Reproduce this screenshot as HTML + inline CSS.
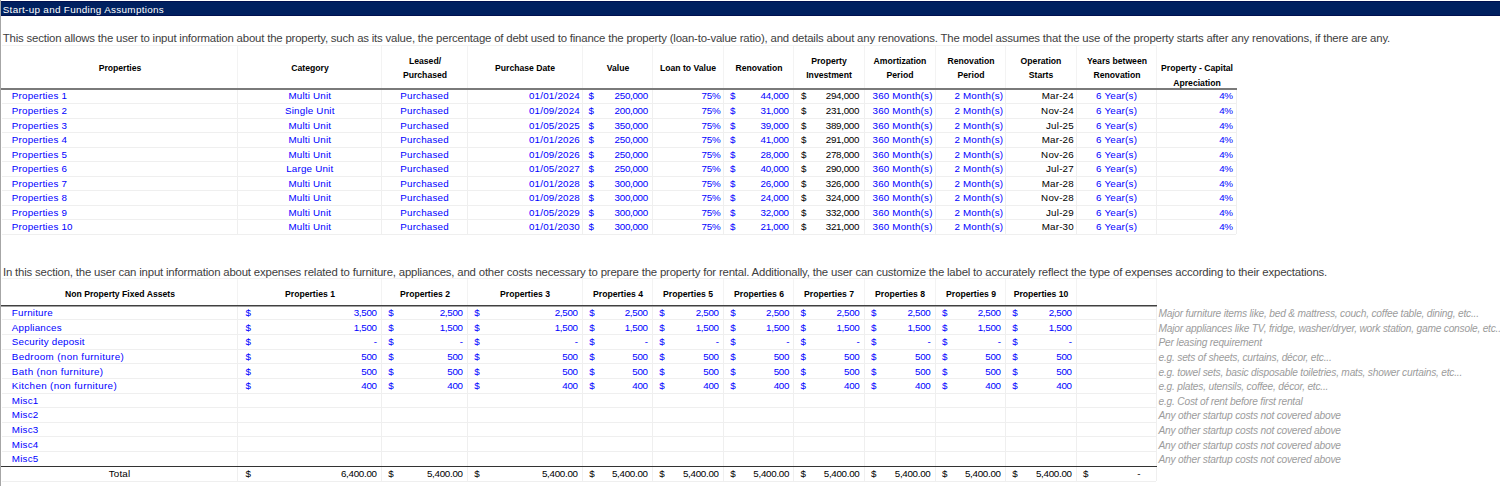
<!DOCTYPE html>
<html><head><meta charset="utf-8"><style>
html,body{margin:0;padding:0;background:#fff;}
body{width:1500px;height:486px;position:relative;overflow:hidden;font-family:"Liberation Sans",sans-serif;}
.t{position:absolute;white-space:nowrap;line-height:14px;height:14px;}
.l{position:absolute;}
</style></head><body>
<div class="l" style="left:0;top:0;width:1px;height:486px;background:#a6a6a6"></div>
<div class="l" style="left:1px;top:1px;width:1499px;height:15px;background:#002060"></div>
<div class="l" style="left:1px;top:1px;width:1499px;height:1px;background:#00104f"></div>
<div class="l" style="left:1px;top:15px;width:1499px;height:1px;background:#00104f"></div>
<div class="t" style="top:2.57px;font-size:9.9px;color:#ffffff;letter-spacing:0.31px;left:2.70px;">Start-up and Funding Assumptions</div>
<div class="t" style="top:31.05px;font-size:11.4px;color:#404040;letter-spacing:-0.186px;left:2.80px;">This section allows the user to input information about the property, such as its value, the percentage of debt used to finance the property (loan-to-value ratio), and details about any renovations. The model assumes that the use of the property starts after any renovations, if there are any.</div>
<div class="l" style="left:2px;top:45px;width:1154px;height:1px;background:#f3f3f3"></div>
<div class="l" style="left:237px;top:45px;width:1px;height:43px;background:#f3f3f3"></div>
<div class="l" style="left:237px;top:90px;width:1px;height:144px;background:#efefef"></div>
<div class="l" style="left:381px;top:45px;width:1px;height:43px;background:#f3f3f3"></div>
<div class="l" style="left:381px;top:90px;width:1px;height:144px;background:#efefef"></div>
<div class="l" style="left:467px;top:45px;width:1px;height:43px;background:#f3f3f3"></div>
<div class="l" style="left:467px;top:90px;width:1px;height:144px;background:#efefef"></div>
<div class="l" style="left:582px;top:45px;width:1px;height:43px;background:#f3f3f3"></div>
<div class="l" style="left:582px;top:90px;width:1px;height:144px;background:#efefef"></div>
<div class="l" style="left:652px;top:45px;width:1px;height:43px;background:#f3f3f3"></div>
<div class="l" style="left:652px;top:90px;width:1px;height:144px;background:#efefef"></div>
<div class="l" style="left:723px;top:45px;width:1px;height:43px;background:#f3f3f3"></div>
<div class="l" style="left:723px;top:90px;width:1px;height:144px;background:#efefef"></div>
<div class="l" style="left:793px;top:45px;width:1px;height:43px;background:#f3f3f3"></div>
<div class="l" style="left:793px;top:90px;width:1px;height:144px;background:#efefef"></div>
<div class="l" style="left:864px;top:45px;width:1px;height:43px;background:#f3f3f3"></div>
<div class="l" style="left:864px;top:90px;width:1px;height:144px;background:#efefef"></div>
<div class="l" style="left:935px;top:45px;width:1px;height:43px;background:#f3f3f3"></div>
<div class="l" style="left:935px;top:90px;width:1px;height:144px;background:#efefef"></div>
<div class="l" style="left:1005px;top:45px;width:1px;height:43px;background:#f3f3f3"></div>
<div class="l" style="left:1005px;top:90px;width:1px;height:144px;background:#efefef"></div>
<div class="l" style="left:1076px;top:45px;width:1px;height:43px;background:#f3f3f3"></div>
<div class="l" style="left:1076px;top:90px;width:1px;height:144px;background:#efefef"></div>
<div class="l" style="left:1156px;top:45px;width:1px;height:43px;background:#f3f3f3"></div>
<div class="l" style="left:1156px;top:90px;width:1px;height:144px;background:#efefef"></div>
<div class="l" style="left:1236px;top:90px;width:1px;height:144px;background:#efefef"></div>
<div class="l" style="left:1px;top:88px;width:1236px;height:2px;background:#7a7a7a"></div>
<div class="l" style="left:2px;top:103px;width:1234px;height:1px;background:#efefef"></div>
<div class="l" style="left:2px;top:118px;width:1234px;height:1px;background:#efefef"></div>
<div class="l" style="left:2px;top:132px;width:1234px;height:1px;background:#efefef"></div>
<div class="l" style="left:2px;top:147px;width:1234px;height:1px;background:#efefef"></div>
<div class="l" style="left:2px;top:161px;width:1234px;height:1px;background:#efefef"></div>
<div class="l" style="left:2px;top:176px;width:1234px;height:1px;background:#efefef"></div>
<div class="l" style="left:2px;top:190px;width:1234px;height:1px;background:#efefef"></div>
<div class="l" style="left:2px;top:205px;width:1234px;height:1px;background:#efefef"></div>
<div class="l" style="left:2px;top:219px;width:1234px;height:1px;background:#efefef"></div>
<div class="l" style="left:2px;top:234px;width:1234px;height:1px;background:#efefef"></div>
<div class="t" style="top:61.42px;font-size:9.6px;color:#000000;font-weight:bold;transform:scaleX(0.9);left:-30.50px;width:300px;text-align:center;">Properties</div>
<div class="t" style="top:61.42px;font-size:9.6px;color:#000000;font-weight:bold;transform:scaleX(0.9);left:159.80px;width:300px;text-align:center;">Category</div>
<div class="t" style="top:53.77px;font-size:9.6px;color:#000000;font-weight:bold;transform:scaleX(0.9);left:274.60px;width:300px;text-align:center;">Leased/</div>
<div class="t" style="top:67.87px;font-size:9.6px;color:#000000;font-weight:bold;transform:scaleX(0.9);left:274.60px;width:300px;text-align:center;">Purchased</div>
<div class="t" style="top:61.42px;font-size:9.6px;color:#000000;font-weight:bold;transform:scaleX(0.9);left:375.10px;width:300px;text-align:center;">Purchase Date</div>
<div class="t" style="top:61.42px;font-size:9.6px;color:#000000;font-weight:bold;transform:scaleX(0.9);left:467.60px;width:300px;text-align:center;">Value</div>
<div class="t" style="top:61.42px;font-size:9.6px;color:#000000;font-weight:bold;transform:scaleX(0.9);left:538.10px;width:300px;text-align:center;">Loan to Value</div>
<div class="t" style="top:61.42px;font-size:9.6px;color:#000000;font-weight:bold;transform:scaleX(0.9);left:608.80px;width:300px;text-align:center;">Renovation</div>
<div class="t" style="top:53.77px;font-size:9.6px;color:#000000;font-weight:bold;transform:scaleX(0.9);left:679.20px;width:300px;text-align:center;">Property</div>
<div class="t" style="top:67.87px;font-size:9.6px;color:#000000;font-weight:bold;transform:scaleX(0.9);left:679.20px;width:300px;text-align:center;">Investment</div>
<div class="t" style="top:53.77px;font-size:9.6px;color:#000000;font-weight:bold;transform:scaleX(0.9);left:749.90px;width:300px;text-align:center;">Amortization</div>
<div class="t" style="top:67.87px;font-size:9.6px;color:#000000;font-weight:bold;transform:scaleX(0.9);left:749.90px;width:300px;text-align:center;">Period</div>
<div class="t" style="top:53.77px;font-size:9.6px;color:#000000;font-weight:bold;transform:scaleX(0.9);left:820.50px;width:300px;text-align:center;">Renovation</div>
<div class="t" style="top:67.87px;font-size:9.6px;color:#000000;font-weight:bold;transform:scaleX(0.9);left:820.50px;width:300px;text-align:center;">Period</div>
<div class="t" style="top:53.77px;font-size:9.6px;color:#000000;font-weight:bold;transform:scaleX(0.9);left:891.10px;width:300px;text-align:center;">Operation</div>
<div class="t" style="top:67.87px;font-size:9.6px;color:#000000;font-weight:bold;transform:scaleX(0.9);left:891.10px;width:300px;text-align:center;">Starts</div>
<div class="t" style="top:53.77px;font-size:9.6px;color:#000000;font-weight:bold;transform:scaleX(0.9);left:966.60px;width:300px;text-align:center;">Years between</div>
<div class="t" style="top:67.87px;font-size:9.6px;color:#000000;font-weight:bold;transform:scaleX(0.9);left:966.60px;width:300px;text-align:center;">Renovation</div>
<div class="t" style="top:61.42px;font-size:9.6px;color:#000000;font-weight:bold;transform:scaleX(0.9);left:1046.50px;width:300px;text-align:center;">Property - Capital</div>
<div class="t" style="top:75.67px;font-size:9.6px;color:#000000;font-weight:bold;transform:scaleX(0.9);left:1046.50px;width:300px;text-align:center;">Apreciation</div>
<div class="t" style="top:89.45px;font-size:9.8px;color:#0000ff;letter-spacing:0.2px;left:11.85px;">Properties 1</div>
<div class="t" style="top:89.45px;font-size:9.8px;color:#0000ff;letter-spacing:0.2px;left:159.80px;width:300px;text-align:center;">Multi Unit</div>
<div class="t" style="top:89.45px;font-size:9.8px;color:#0000ff;letter-spacing:0.2px;left:274.60px;width:300px;text-align:center;">Purchased</div>
<div class="t" style="top:89.45px;font-size:9.8px;color:#0000ff;letter-spacing:0.2px;right:920.00px;text-align:right;">01/01/2024</div>
<div class="t" style="top:89.45px;font-size:9.8px;color:#0000ff;letter-spacing:-0.3px;left:588.60px;">$</div>
<div class="t" style="top:89.45px;font-size:9.8px;color:#0000ff;letter-spacing:-0.3px;right:852.10px;text-align:right;">250,000</div>
<div class="t" style="top:89.45px;font-size:9.8px;color:#0000ff;letter-spacing:-0.3px;right:779.70px;text-align:right;">75%</div>
<div class="t" style="top:89.45px;font-size:9.8px;color:#0000ff;letter-spacing:-0.3px;left:730.00px;">$</div>
<div class="t" style="top:89.45px;font-size:9.8px;color:#0000ff;letter-spacing:-0.3px;right:711.30px;text-align:right;">44,000</div>
<div class="t" style="top:89.45px;font-size:9.8px;color:#000000;letter-spacing:-0.3px;left:801.00px;">$</div>
<div class="t" style="top:89.45px;font-size:9.8px;color:#000000;letter-spacing:-0.3px;right:640.90px;text-align:right;">294,000</div>
<div class="t" style="top:89.45px;font-size:9.8px;color:#0000ff;letter-spacing:0.2px;right:567.40px;text-align:right;">360 Month(s)</div>
<div class="t" style="top:89.45px;font-size:9.8px;color:#0000ff;letter-spacing:0.2px;right:496.80px;text-align:right;">2 Month(s)</div>
<div class="t" style="top:89.45px;font-size:9.8px;color:#000000;letter-spacing:0.2px;right:426.10px;text-align:right;">Mar-24</div>
<div class="t" style="top:89.45px;font-size:9.8px;color:#0000ff;letter-spacing:0.2px;left:966.60px;width:300px;text-align:center;">6 Year(s)</div>
<div class="t" style="top:89.45px;font-size:9.8px;color:#0000ff;letter-spacing:-0.3px;right:267.30px;text-align:right;">4%</div>
<div class="t" style="top:103.99px;font-size:9.8px;color:#0000ff;letter-spacing:0.2px;left:11.85px;">Properties 2</div>
<div class="t" style="top:103.99px;font-size:9.8px;color:#0000ff;letter-spacing:0.2px;left:159.80px;width:300px;text-align:center;">Single Unit</div>
<div class="t" style="top:103.99px;font-size:9.8px;color:#0000ff;letter-spacing:0.2px;left:274.60px;width:300px;text-align:center;">Purchased</div>
<div class="t" style="top:103.99px;font-size:9.8px;color:#0000ff;letter-spacing:0.2px;right:920.00px;text-align:right;">01/09/2024</div>
<div class="t" style="top:103.99px;font-size:9.8px;color:#0000ff;letter-spacing:-0.3px;left:588.60px;">$</div>
<div class="t" style="top:103.99px;font-size:9.8px;color:#0000ff;letter-spacing:-0.3px;right:852.10px;text-align:right;">200,000</div>
<div class="t" style="top:103.99px;font-size:9.8px;color:#0000ff;letter-spacing:-0.3px;right:779.70px;text-align:right;">75%</div>
<div class="t" style="top:103.99px;font-size:9.8px;color:#0000ff;letter-spacing:-0.3px;left:730.00px;">$</div>
<div class="t" style="top:103.99px;font-size:9.8px;color:#0000ff;letter-spacing:-0.3px;right:711.30px;text-align:right;">31,000</div>
<div class="t" style="top:103.99px;font-size:9.8px;color:#000000;letter-spacing:-0.3px;left:801.00px;">$</div>
<div class="t" style="top:103.99px;font-size:9.8px;color:#000000;letter-spacing:-0.3px;right:640.90px;text-align:right;">231,000</div>
<div class="t" style="top:103.99px;font-size:9.8px;color:#0000ff;letter-spacing:0.2px;right:567.40px;text-align:right;">360 Month(s)</div>
<div class="t" style="top:103.99px;font-size:9.8px;color:#0000ff;letter-spacing:0.2px;right:496.80px;text-align:right;">2 Month(s)</div>
<div class="t" style="top:103.99px;font-size:9.8px;color:#000000;letter-spacing:0.2px;right:426.10px;text-align:right;">Nov-24</div>
<div class="t" style="top:103.99px;font-size:9.8px;color:#0000ff;letter-spacing:0.2px;left:966.60px;width:300px;text-align:center;">6 Year(s)</div>
<div class="t" style="top:103.99px;font-size:9.8px;color:#0000ff;letter-spacing:-0.3px;right:267.30px;text-align:right;">4%</div>
<div class="t" style="top:118.53px;font-size:9.8px;color:#0000ff;letter-spacing:0.2px;left:11.85px;">Properties 3</div>
<div class="t" style="top:118.53px;font-size:9.8px;color:#0000ff;letter-spacing:0.2px;left:159.80px;width:300px;text-align:center;">Multi Unit</div>
<div class="t" style="top:118.53px;font-size:9.8px;color:#0000ff;letter-spacing:0.2px;left:274.60px;width:300px;text-align:center;">Purchased</div>
<div class="t" style="top:118.53px;font-size:9.8px;color:#0000ff;letter-spacing:0.2px;right:920.00px;text-align:right;">01/05/2025</div>
<div class="t" style="top:118.53px;font-size:9.8px;color:#0000ff;letter-spacing:-0.3px;left:588.60px;">$</div>
<div class="t" style="top:118.53px;font-size:9.8px;color:#0000ff;letter-spacing:-0.3px;right:852.10px;text-align:right;">350,000</div>
<div class="t" style="top:118.53px;font-size:9.8px;color:#0000ff;letter-spacing:-0.3px;right:779.70px;text-align:right;">75%</div>
<div class="t" style="top:118.53px;font-size:9.8px;color:#0000ff;letter-spacing:-0.3px;left:730.00px;">$</div>
<div class="t" style="top:118.53px;font-size:9.8px;color:#0000ff;letter-spacing:-0.3px;right:711.30px;text-align:right;">39,000</div>
<div class="t" style="top:118.53px;font-size:9.8px;color:#000000;letter-spacing:-0.3px;left:801.00px;">$</div>
<div class="t" style="top:118.53px;font-size:9.8px;color:#000000;letter-spacing:-0.3px;right:640.90px;text-align:right;">389,000</div>
<div class="t" style="top:118.53px;font-size:9.8px;color:#0000ff;letter-spacing:0.2px;right:567.40px;text-align:right;">360 Month(s)</div>
<div class="t" style="top:118.53px;font-size:9.8px;color:#0000ff;letter-spacing:0.2px;right:496.80px;text-align:right;">2 Month(s)</div>
<div class="t" style="top:118.53px;font-size:9.8px;color:#000000;letter-spacing:0.2px;right:426.10px;text-align:right;">Jul-25</div>
<div class="t" style="top:118.53px;font-size:9.8px;color:#0000ff;letter-spacing:0.2px;left:966.60px;width:300px;text-align:center;">6 Year(s)</div>
<div class="t" style="top:118.53px;font-size:9.8px;color:#0000ff;letter-spacing:-0.3px;right:267.30px;text-align:right;">4%</div>
<div class="t" style="top:133.07px;font-size:9.8px;color:#0000ff;letter-spacing:0.2px;left:11.85px;">Properties 4</div>
<div class="t" style="top:133.07px;font-size:9.8px;color:#0000ff;letter-spacing:0.2px;left:159.80px;width:300px;text-align:center;">Multi Unit</div>
<div class="t" style="top:133.07px;font-size:9.8px;color:#0000ff;letter-spacing:0.2px;left:274.60px;width:300px;text-align:center;">Purchased</div>
<div class="t" style="top:133.07px;font-size:9.8px;color:#0000ff;letter-spacing:0.2px;right:920.00px;text-align:right;">01/01/2026</div>
<div class="t" style="top:133.07px;font-size:9.8px;color:#0000ff;letter-spacing:-0.3px;left:588.60px;">$</div>
<div class="t" style="top:133.07px;font-size:9.8px;color:#0000ff;letter-spacing:-0.3px;right:852.10px;text-align:right;">250,000</div>
<div class="t" style="top:133.07px;font-size:9.8px;color:#0000ff;letter-spacing:-0.3px;right:779.70px;text-align:right;">75%</div>
<div class="t" style="top:133.07px;font-size:9.8px;color:#0000ff;letter-spacing:-0.3px;left:730.00px;">$</div>
<div class="t" style="top:133.07px;font-size:9.8px;color:#0000ff;letter-spacing:-0.3px;right:711.30px;text-align:right;">41,000</div>
<div class="t" style="top:133.07px;font-size:9.8px;color:#000000;letter-spacing:-0.3px;left:801.00px;">$</div>
<div class="t" style="top:133.07px;font-size:9.8px;color:#000000;letter-spacing:-0.3px;right:640.90px;text-align:right;">291,000</div>
<div class="t" style="top:133.07px;font-size:9.8px;color:#0000ff;letter-spacing:0.2px;right:567.40px;text-align:right;">360 Month(s)</div>
<div class="t" style="top:133.07px;font-size:9.8px;color:#0000ff;letter-spacing:0.2px;right:496.80px;text-align:right;">2 Month(s)</div>
<div class="t" style="top:133.07px;font-size:9.8px;color:#000000;letter-spacing:0.2px;right:426.10px;text-align:right;">Mar-26</div>
<div class="t" style="top:133.07px;font-size:9.8px;color:#0000ff;letter-spacing:0.2px;left:966.60px;width:300px;text-align:center;">6 Year(s)</div>
<div class="t" style="top:133.07px;font-size:9.8px;color:#0000ff;letter-spacing:-0.3px;right:267.30px;text-align:right;">4%</div>
<div class="t" style="top:147.61px;font-size:9.8px;color:#0000ff;letter-spacing:0.2px;left:11.85px;">Properties 5</div>
<div class="t" style="top:147.61px;font-size:9.8px;color:#0000ff;letter-spacing:0.2px;left:159.80px;width:300px;text-align:center;">Multi Unit</div>
<div class="t" style="top:147.61px;font-size:9.8px;color:#0000ff;letter-spacing:0.2px;left:274.60px;width:300px;text-align:center;">Purchased</div>
<div class="t" style="top:147.61px;font-size:9.8px;color:#0000ff;letter-spacing:0.2px;right:920.00px;text-align:right;">01/09/2026</div>
<div class="t" style="top:147.61px;font-size:9.8px;color:#0000ff;letter-spacing:-0.3px;left:588.60px;">$</div>
<div class="t" style="top:147.61px;font-size:9.8px;color:#0000ff;letter-spacing:-0.3px;right:852.10px;text-align:right;">250,000</div>
<div class="t" style="top:147.61px;font-size:9.8px;color:#0000ff;letter-spacing:-0.3px;right:779.70px;text-align:right;">75%</div>
<div class="t" style="top:147.61px;font-size:9.8px;color:#0000ff;letter-spacing:-0.3px;left:730.00px;">$</div>
<div class="t" style="top:147.61px;font-size:9.8px;color:#0000ff;letter-spacing:-0.3px;right:711.30px;text-align:right;">28,000</div>
<div class="t" style="top:147.61px;font-size:9.8px;color:#000000;letter-spacing:-0.3px;left:801.00px;">$</div>
<div class="t" style="top:147.61px;font-size:9.8px;color:#000000;letter-spacing:-0.3px;right:640.90px;text-align:right;">278,000</div>
<div class="t" style="top:147.61px;font-size:9.8px;color:#0000ff;letter-spacing:0.2px;right:567.40px;text-align:right;">360 Month(s)</div>
<div class="t" style="top:147.61px;font-size:9.8px;color:#0000ff;letter-spacing:0.2px;right:496.80px;text-align:right;">2 Month(s)</div>
<div class="t" style="top:147.61px;font-size:9.8px;color:#000000;letter-spacing:0.2px;right:426.10px;text-align:right;">Nov-26</div>
<div class="t" style="top:147.61px;font-size:9.8px;color:#0000ff;letter-spacing:0.2px;left:966.60px;width:300px;text-align:center;">6 Year(s)</div>
<div class="t" style="top:147.61px;font-size:9.8px;color:#0000ff;letter-spacing:-0.3px;right:267.30px;text-align:right;">4%</div>
<div class="t" style="top:162.15px;font-size:9.8px;color:#0000ff;letter-spacing:0.2px;left:11.85px;">Properties 6</div>
<div class="t" style="top:162.15px;font-size:9.8px;color:#0000ff;letter-spacing:0.2px;left:159.80px;width:300px;text-align:center;">Large Unit</div>
<div class="t" style="top:162.15px;font-size:9.8px;color:#0000ff;letter-spacing:0.2px;left:274.60px;width:300px;text-align:center;">Purchased</div>
<div class="t" style="top:162.15px;font-size:9.8px;color:#0000ff;letter-spacing:0.2px;right:920.00px;text-align:right;">01/05/2027</div>
<div class="t" style="top:162.15px;font-size:9.8px;color:#0000ff;letter-spacing:-0.3px;left:588.60px;">$</div>
<div class="t" style="top:162.15px;font-size:9.8px;color:#0000ff;letter-spacing:-0.3px;right:852.10px;text-align:right;">250,000</div>
<div class="t" style="top:162.15px;font-size:9.8px;color:#0000ff;letter-spacing:-0.3px;right:779.70px;text-align:right;">75%</div>
<div class="t" style="top:162.15px;font-size:9.8px;color:#0000ff;letter-spacing:-0.3px;left:730.00px;">$</div>
<div class="t" style="top:162.15px;font-size:9.8px;color:#0000ff;letter-spacing:-0.3px;right:711.30px;text-align:right;">40,000</div>
<div class="t" style="top:162.15px;font-size:9.8px;color:#000000;letter-spacing:-0.3px;left:801.00px;">$</div>
<div class="t" style="top:162.15px;font-size:9.8px;color:#000000;letter-spacing:-0.3px;right:640.90px;text-align:right;">290,000</div>
<div class="t" style="top:162.15px;font-size:9.8px;color:#0000ff;letter-spacing:0.2px;right:567.40px;text-align:right;">360 Month(s)</div>
<div class="t" style="top:162.15px;font-size:9.8px;color:#0000ff;letter-spacing:0.2px;right:496.80px;text-align:right;">2 Month(s)</div>
<div class="t" style="top:162.15px;font-size:9.8px;color:#000000;letter-spacing:0.2px;right:426.10px;text-align:right;">Jul-27</div>
<div class="t" style="top:162.15px;font-size:9.8px;color:#0000ff;letter-spacing:0.2px;left:966.60px;width:300px;text-align:center;">6 Year(s)</div>
<div class="t" style="top:162.15px;font-size:9.8px;color:#0000ff;letter-spacing:-0.3px;right:267.30px;text-align:right;">4%</div>
<div class="t" style="top:176.69px;font-size:9.8px;color:#0000ff;letter-spacing:0.2px;left:11.85px;">Properties 7</div>
<div class="t" style="top:176.69px;font-size:9.8px;color:#0000ff;letter-spacing:0.2px;left:159.80px;width:300px;text-align:center;">Multi Unit</div>
<div class="t" style="top:176.69px;font-size:9.8px;color:#0000ff;letter-spacing:0.2px;left:274.60px;width:300px;text-align:center;">Purchased</div>
<div class="t" style="top:176.69px;font-size:9.8px;color:#0000ff;letter-spacing:0.2px;right:920.00px;text-align:right;">01/01/2028</div>
<div class="t" style="top:176.69px;font-size:9.8px;color:#0000ff;letter-spacing:-0.3px;left:588.60px;">$</div>
<div class="t" style="top:176.69px;font-size:9.8px;color:#0000ff;letter-spacing:-0.3px;right:852.10px;text-align:right;">300,000</div>
<div class="t" style="top:176.69px;font-size:9.8px;color:#0000ff;letter-spacing:-0.3px;right:779.70px;text-align:right;">75%</div>
<div class="t" style="top:176.69px;font-size:9.8px;color:#0000ff;letter-spacing:-0.3px;left:730.00px;">$</div>
<div class="t" style="top:176.69px;font-size:9.8px;color:#0000ff;letter-spacing:-0.3px;right:711.30px;text-align:right;">26,000</div>
<div class="t" style="top:176.69px;font-size:9.8px;color:#000000;letter-spacing:-0.3px;left:801.00px;">$</div>
<div class="t" style="top:176.69px;font-size:9.8px;color:#000000;letter-spacing:-0.3px;right:640.90px;text-align:right;">326,000</div>
<div class="t" style="top:176.69px;font-size:9.8px;color:#0000ff;letter-spacing:0.2px;right:567.40px;text-align:right;">360 Month(s)</div>
<div class="t" style="top:176.69px;font-size:9.8px;color:#0000ff;letter-spacing:0.2px;right:496.80px;text-align:right;">2 Month(s)</div>
<div class="t" style="top:176.69px;font-size:9.8px;color:#000000;letter-spacing:0.2px;right:426.10px;text-align:right;">Mar-28</div>
<div class="t" style="top:176.69px;font-size:9.8px;color:#0000ff;letter-spacing:0.2px;left:966.60px;width:300px;text-align:center;">6 Year(s)</div>
<div class="t" style="top:176.69px;font-size:9.8px;color:#0000ff;letter-spacing:-0.3px;right:267.30px;text-align:right;">4%</div>
<div class="t" style="top:191.23px;font-size:9.8px;color:#0000ff;letter-spacing:0.2px;left:11.85px;">Properties 8</div>
<div class="t" style="top:191.23px;font-size:9.8px;color:#0000ff;letter-spacing:0.2px;left:159.80px;width:300px;text-align:center;">Multi Unit</div>
<div class="t" style="top:191.23px;font-size:9.8px;color:#0000ff;letter-spacing:0.2px;left:274.60px;width:300px;text-align:center;">Purchased</div>
<div class="t" style="top:191.23px;font-size:9.8px;color:#0000ff;letter-spacing:0.2px;right:920.00px;text-align:right;">01/09/2028</div>
<div class="t" style="top:191.23px;font-size:9.8px;color:#0000ff;letter-spacing:-0.3px;left:588.60px;">$</div>
<div class="t" style="top:191.23px;font-size:9.8px;color:#0000ff;letter-spacing:-0.3px;right:852.10px;text-align:right;">300,000</div>
<div class="t" style="top:191.23px;font-size:9.8px;color:#0000ff;letter-spacing:-0.3px;right:779.70px;text-align:right;">75%</div>
<div class="t" style="top:191.23px;font-size:9.8px;color:#0000ff;letter-spacing:-0.3px;left:730.00px;">$</div>
<div class="t" style="top:191.23px;font-size:9.8px;color:#0000ff;letter-spacing:-0.3px;right:711.30px;text-align:right;">24,000</div>
<div class="t" style="top:191.23px;font-size:9.8px;color:#000000;letter-spacing:-0.3px;left:801.00px;">$</div>
<div class="t" style="top:191.23px;font-size:9.8px;color:#000000;letter-spacing:-0.3px;right:640.90px;text-align:right;">324,000</div>
<div class="t" style="top:191.23px;font-size:9.8px;color:#0000ff;letter-spacing:0.2px;right:567.40px;text-align:right;">360 Month(s)</div>
<div class="t" style="top:191.23px;font-size:9.8px;color:#0000ff;letter-spacing:0.2px;right:496.80px;text-align:right;">2 Month(s)</div>
<div class="t" style="top:191.23px;font-size:9.8px;color:#000000;letter-spacing:0.2px;right:426.10px;text-align:right;">Nov-28</div>
<div class="t" style="top:191.23px;font-size:9.8px;color:#0000ff;letter-spacing:0.2px;left:966.60px;width:300px;text-align:center;">6 Year(s)</div>
<div class="t" style="top:191.23px;font-size:9.8px;color:#0000ff;letter-spacing:-0.3px;right:267.30px;text-align:right;">4%</div>
<div class="t" style="top:205.77px;font-size:9.8px;color:#0000ff;letter-spacing:0.2px;left:11.85px;">Properties 9</div>
<div class="t" style="top:205.77px;font-size:9.8px;color:#0000ff;letter-spacing:0.2px;left:159.80px;width:300px;text-align:center;">Multi Unit</div>
<div class="t" style="top:205.77px;font-size:9.8px;color:#0000ff;letter-spacing:0.2px;left:274.60px;width:300px;text-align:center;">Purchased</div>
<div class="t" style="top:205.77px;font-size:9.8px;color:#0000ff;letter-spacing:0.2px;right:920.00px;text-align:right;">01/05/2029</div>
<div class="t" style="top:205.77px;font-size:9.8px;color:#0000ff;letter-spacing:-0.3px;left:588.60px;">$</div>
<div class="t" style="top:205.77px;font-size:9.8px;color:#0000ff;letter-spacing:-0.3px;right:852.10px;text-align:right;">300,000</div>
<div class="t" style="top:205.77px;font-size:9.8px;color:#0000ff;letter-spacing:-0.3px;right:779.70px;text-align:right;">75%</div>
<div class="t" style="top:205.77px;font-size:9.8px;color:#0000ff;letter-spacing:-0.3px;left:730.00px;">$</div>
<div class="t" style="top:205.77px;font-size:9.8px;color:#0000ff;letter-spacing:-0.3px;right:711.30px;text-align:right;">32,000</div>
<div class="t" style="top:205.77px;font-size:9.8px;color:#000000;letter-spacing:-0.3px;left:801.00px;">$</div>
<div class="t" style="top:205.77px;font-size:9.8px;color:#000000;letter-spacing:-0.3px;right:640.90px;text-align:right;">332,000</div>
<div class="t" style="top:205.77px;font-size:9.8px;color:#0000ff;letter-spacing:0.2px;right:567.40px;text-align:right;">360 Month(s)</div>
<div class="t" style="top:205.77px;font-size:9.8px;color:#0000ff;letter-spacing:0.2px;right:496.80px;text-align:right;">2 Month(s)</div>
<div class="t" style="top:205.77px;font-size:9.8px;color:#000000;letter-spacing:0.2px;right:426.10px;text-align:right;">Jul-29</div>
<div class="t" style="top:205.77px;font-size:9.8px;color:#0000ff;letter-spacing:0.2px;left:966.60px;width:300px;text-align:center;">6 Year(s)</div>
<div class="t" style="top:205.77px;font-size:9.8px;color:#0000ff;letter-spacing:-0.3px;right:267.30px;text-align:right;">4%</div>
<div class="t" style="top:220.31px;font-size:9.8px;color:#0000ff;letter-spacing:0.2px;left:11.85px;">Properties 10</div>
<div class="t" style="top:220.31px;font-size:9.8px;color:#0000ff;letter-spacing:0.2px;left:159.80px;width:300px;text-align:center;">Multi Unit</div>
<div class="t" style="top:220.31px;font-size:9.8px;color:#0000ff;letter-spacing:0.2px;left:274.60px;width:300px;text-align:center;">Purchased</div>
<div class="t" style="top:220.31px;font-size:9.8px;color:#0000ff;letter-spacing:0.2px;right:920.00px;text-align:right;">01/01/2030</div>
<div class="t" style="top:220.31px;font-size:9.8px;color:#0000ff;letter-spacing:-0.3px;left:588.60px;">$</div>
<div class="t" style="top:220.31px;font-size:9.8px;color:#0000ff;letter-spacing:-0.3px;right:852.10px;text-align:right;">300,000</div>
<div class="t" style="top:220.31px;font-size:9.8px;color:#0000ff;letter-spacing:-0.3px;right:779.70px;text-align:right;">75%</div>
<div class="t" style="top:220.31px;font-size:9.8px;color:#0000ff;letter-spacing:-0.3px;left:730.00px;">$</div>
<div class="t" style="top:220.31px;font-size:9.8px;color:#0000ff;letter-spacing:-0.3px;right:711.30px;text-align:right;">21,000</div>
<div class="t" style="top:220.31px;font-size:9.8px;color:#000000;letter-spacing:-0.3px;left:801.00px;">$</div>
<div class="t" style="top:220.31px;font-size:9.8px;color:#000000;letter-spacing:-0.3px;right:640.90px;text-align:right;">321,000</div>
<div class="t" style="top:220.31px;font-size:9.8px;color:#0000ff;letter-spacing:0.2px;right:567.40px;text-align:right;">360 Month(s)</div>
<div class="t" style="top:220.31px;font-size:9.8px;color:#0000ff;letter-spacing:0.2px;right:496.80px;text-align:right;">2 Month(s)</div>
<div class="t" style="top:220.31px;font-size:9.8px;color:#000000;letter-spacing:0.2px;right:426.10px;text-align:right;">Mar-30</div>
<div class="t" style="top:220.31px;font-size:9.8px;color:#0000ff;letter-spacing:0.2px;left:966.60px;width:300px;text-align:center;">6 Year(s)</div>
<div class="t" style="top:220.31px;font-size:9.8px;color:#0000ff;letter-spacing:-0.3px;right:267.30px;text-align:right;">4%</div>
<div class="t" style="top:264.75px;font-size:11.4px;color:#404040;letter-spacing:-0.186px;left:3.00px;">In this section, the user can input information about expenses related to furniture, appliances, and other costs necessary to prepare the property for rental. Additionally, the user can customize the label to accurately reflect the type of expenses according to their expectations.</div>
<div class="l" style="left:2px;top:278px;width:1154px;height:1px;background:#f3f3f3"></div>
<div class="l" style="left:237px;top:278px;width:1px;height:27px;background:#f3f3f3"></div>
<div class="l" style="left:237px;top:307px;width:1px;height:159px;background:#efefef"></div>
<div class="l" style="left:237px;top:467px;width:1px;height:14px;background:#efefef"></div>
<div class="l" style="left:381px;top:278px;width:1px;height:27px;background:#f3f3f3"></div>
<div class="l" style="left:381px;top:307px;width:1px;height:159px;background:#efefef"></div>
<div class="l" style="left:381px;top:467px;width:1px;height:14px;background:#efefef"></div>
<div class="l" style="left:467px;top:278px;width:1px;height:27px;background:#f3f3f3"></div>
<div class="l" style="left:467px;top:307px;width:1px;height:159px;background:#efefef"></div>
<div class="l" style="left:467px;top:467px;width:1px;height:14px;background:#efefef"></div>
<div class="l" style="left:582px;top:278px;width:1px;height:27px;background:#f3f3f3"></div>
<div class="l" style="left:582px;top:307px;width:1px;height:159px;background:#efefef"></div>
<div class="l" style="left:582px;top:467px;width:1px;height:14px;background:#efefef"></div>
<div class="l" style="left:652px;top:278px;width:1px;height:27px;background:#f3f3f3"></div>
<div class="l" style="left:652px;top:307px;width:1px;height:159px;background:#efefef"></div>
<div class="l" style="left:652px;top:467px;width:1px;height:14px;background:#efefef"></div>
<div class="l" style="left:723px;top:278px;width:1px;height:27px;background:#f3f3f3"></div>
<div class="l" style="left:723px;top:307px;width:1px;height:159px;background:#efefef"></div>
<div class="l" style="left:723px;top:467px;width:1px;height:14px;background:#efefef"></div>
<div class="l" style="left:793px;top:278px;width:1px;height:27px;background:#f3f3f3"></div>
<div class="l" style="left:793px;top:307px;width:1px;height:159px;background:#efefef"></div>
<div class="l" style="left:793px;top:467px;width:1px;height:14px;background:#efefef"></div>
<div class="l" style="left:864px;top:278px;width:1px;height:27px;background:#f3f3f3"></div>
<div class="l" style="left:864px;top:307px;width:1px;height:159px;background:#efefef"></div>
<div class="l" style="left:864px;top:467px;width:1px;height:14px;background:#efefef"></div>
<div class="l" style="left:935px;top:278px;width:1px;height:27px;background:#f3f3f3"></div>
<div class="l" style="left:935px;top:307px;width:1px;height:159px;background:#efefef"></div>
<div class="l" style="left:935px;top:467px;width:1px;height:14px;background:#efefef"></div>
<div class="l" style="left:1005px;top:278px;width:1px;height:27px;background:#f3f3f3"></div>
<div class="l" style="left:1005px;top:307px;width:1px;height:159px;background:#efefef"></div>
<div class="l" style="left:1005px;top:467px;width:1px;height:14px;background:#efefef"></div>
<div class="l" style="left:1076px;top:278px;width:1px;height:27px;background:#f3f3f3"></div>
<div class="l" style="left:1076px;top:307px;width:1px;height:159px;background:#efefef"></div>
<div class="l" style="left:1076px;top:467px;width:1px;height:14px;background:#efefef"></div>
<div class="l" style="left:1156px;top:278px;width:1px;height:27px;background:#f3f3f3"></div>
<div class="l" style="left:1156px;top:307px;width:1px;height:159px;background:#efefef"></div>
<div class="l" style="left:1156px;top:467px;width:1px;height:14px;background:#efefef"></div>
<div class="l" style="left:1px;top:305px;width:1156px;height:1px;background:#404040"></div>
<div class="l" style="left:1px;top:306px;width:1156px;height:1px;background:#a0a0a0"></div>
<div class="l" style="left:2px;top:319px;width:1154px;height:1px;background:#efefef"></div>
<div class="l" style="left:2px;top:334px;width:1154px;height:1px;background:#efefef"></div>
<div class="l" style="left:2px;top:349px;width:1154px;height:1px;background:#efefef"></div>
<div class="l" style="left:2px;top:363px;width:1154px;height:1px;background:#efefef"></div>
<div class="l" style="left:2px;top:378px;width:1154px;height:1px;background:#efefef"></div>
<div class="l" style="left:2px;top:393px;width:1154px;height:1px;background:#efefef"></div>
<div class="l" style="left:2px;top:407px;width:1154px;height:1px;background:#efefef"></div>
<div class="l" style="left:2px;top:422px;width:1154px;height:1px;background:#efefef"></div>
<div class="l" style="left:2px;top:436px;width:1154px;height:1px;background:#efefef"></div>
<div class="l" style="left:2px;top:451px;width:1154px;height:1px;background:#efefef"></div>
<div class="l" style="left:1px;top:466px;width:1156px;height:1px;background:#333333"></div>
<div class="l" style="left:2px;top:481px;width:1154px;height:1px;background:#efefef"></div>
<div class="t" style="top:286.92px;font-size:9.6px;color:#000000;font-weight:bold;transform:scaleX(0.9);left:-30.50px;width:300px;text-align:center;">Non Property Fixed Assets</div>
<div class="t" style="top:286.92px;font-size:9.6px;color:#000000;font-weight:bold;transform:scaleX(0.9);left:159.80px;width:300px;text-align:center;">Properties 1</div>
<div class="t" style="top:286.92px;font-size:9.6px;color:#000000;font-weight:bold;transform:scaleX(0.9);left:274.60px;width:300px;text-align:center;">Properties 2</div>
<div class="t" style="top:286.92px;font-size:9.6px;color:#000000;font-weight:bold;transform:scaleX(0.9);left:375.10px;width:300px;text-align:center;">Properties 3</div>
<div class="t" style="top:286.92px;font-size:9.6px;color:#000000;font-weight:bold;transform:scaleX(0.9);left:467.60px;width:300px;text-align:center;">Properties 4</div>
<div class="t" style="top:286.92px;font-size:9.6px;color:#000000;font-weight:bold;transform:scaleX(0.9);left:538.10px;width:300px;text-align:center;">Properties 5</div>
<div class="t" style="top:286.92px;font-size:9.6px;color:#000000;font-weight:bold;transform:scaleX(0.9);left:608.80px;width:300px;text-align:center;">Properties 6</div>
<div class="t" style="top:286.92px;font-size:9.6px;color:#000000;font-weight:bold;transform:scaleX(0.9);left:679.20px;width:300px;text-align:center;">Properties 7</div>
<div class="t" style="top:286.92px;font-size:9.6px;color:#000000;font-weight:bold;transform:scaleX(0.9);left:749.90px;width:300px;text-align:center;">Properties 8</div>
<div class="t" style="top:286.92px;font-size:9.6px;color:#000000;font-weight:bold;transform:scaleX(0.9);left:820.50px;width:300px;text-align:center;">Properties 9</div>
<div class="t" style="top:286.92px;font-size:9.6px;color:#000000;font-weight:bold;transform:scaleX(0.9);left:891.10px;width:300px;text-align:center;">Properties 10</div>
<div class="t" style="top:306.00px;font-size:9.8px;color:#0000ff;letter-spacing:0.2px;left:11.85px;">Furniture</div>
<div class="t" style="top:306.00px;font-size:9.8px;color:#0000ff;letter-spacing:-0.3px;left:245.60px;">$</div>
<div class="t" style="top:306.00px;font-size:9.8px;color:#0000ff;letter-spacing:-0.3px;right:1123.30px;text-align:right;">3,500</div>
<div class="t" style="top:306.00px;font-size:9.8px;color:#0000ff;letter-spacing:-0.3px;left:388.20px;">$</div>
<div class="t" style="top:306.00px;font-size:9.8px;color:#0000ff;letter-spacing:-0.3px;right:1037.30px;text-align:right;">2,500</div>
<div class="t" style="top:306.00px;font-size:9.8px;color:#0000ff;letter-spacing:-0.3px;left:474.20px;">$</div>
<div class="t" style="top:306.00px;font-size:9.8px;color:#0000ff;letter-spacing:-0.3px;right:922.30px;text-align:right;">2,500</div>
<div class="t" style="top:306.00px;font-size:9.8px;color:#0000ff;letter-spacing:-0.3px;left:589.20px;">$</div>
<div class="t" style="top:306.00px;font-size:9.8px;color:#0000ff;letter-spacing:-0.3px;right:852.30px;text-align:right;">2,500</div>
<div class="t" style="top:306.00px;font-size:9.8px;color:#0000ff;letter-spacing:-0.3px;left:659.20px;">$</div>
<div class="t" style="top:306.00px;font-size:9.8px;color:#0000ff;letter-spacing:-0.3px;right:781.30px;text-align:right;">2,500</div>
<div class="t" style="top:306.00px;font-size:9.8px;color:#0000ff;letter-spacing:-0.3px;left:730.20px;">$</div>
<div class="t" style="top:306.00px;font-size:9.8px;color:#0000ff;letter-spacing:-0.3px;right:710.90px;text-align:right;">2,500</div>
<div class="t" style="top:306.00px;font-size:9.8px;color:#0000ff;letter-spacing:-0.3px;left:800.60px;">$</div>
<div class="t" style="top:306.00px;font-size:9.8px;color:#0000ff;letter-spacing:-0.3px;right:640.50px;text-align:right;">2,500</div>
<div class="t" style="top:306.00px;font-size:9.8px;color:#0000ff;letter-spacing:-0.3px;left:871.00px;">$</div>
<div class="t" style="top:306.00px;font-size:9.8px;color:#0000ff;letter-spacing:-0.3px;right:569.50px;text-align:right;">2,500</div>
<div class="t" style="top:306.00px;font-size:9.8px;color:#0000ff;letter-spacing:-0.3px;left:942.00px;">$</div>
<div class="t" style="top:306.00px;font-size:9.8px;color:#0000ff;letter-spacing:-0.3px;right:499.30px;text-align:right;">2,500</div>
<div class="t" style="top:306.00px;font-size:9.8px;color:#0000ff;letter-spacing:-0.3px;left:1012.20px;">$</div>
<div class="t" style="top:306.00px;font-size:9.8px;color:#0000ff;letter-spacing:-0.3px;right:428.30px;text-align:right;">2,500</div>
<div class="t" style="top:307.06px;font-size:10.2px;color:#9c9c9c;letter-spacing:-0.21px;font-style:italic;left:1158.50px;">Major furniture items like, bed &amp; mattress, couch, coffee table, dining, etc...</div>
<div class="t" style="top:320.63px;font-size:9.8px;color:#0000ff;letter-spacing:0.2px;left:11.85px;">Appliances</div>
<div class="t" style="top:320.63px;font-size:9.8px;color:#0000ff;letter-spacing:-0.3px;left:245.60px;">$</div>
<div class="t" style="top:320.63px;font-size:9.8px;color:#0000ff;letter-spacing:-0.3px;right:1123.30px;text-align:right;">1,500</div>
<div class="t" style="top:320.63px;font-size:9.8px;color:#0000ff;letter-spacing:-0.3px;left:388.20px;">$</div>
<div class="t" style="top:320.63px;font-size:9.8px;color:#0000ff;letter-spacing:-0.3px;right:1037.30px;text-align:right;">1,500</div>
<div class="t" style="top:320.63px;font-size:9.8px;color:#0000ff;letter-spacing:-0.3px;left:474.20px;">$</div>
<div class="t" style="top:320.63px;font-size:9.8px;color:#0000ff;letter-spacing:-0.3px;right:922.30px;text-align:right;">1,500</div>
<div class="t" style="top:320.63px;font-size:9.8px;color:#0000ff;letter-spacing:-0.3px;left:589.20px;">$</div>
<div class="t" style="top:320.63px;font-size:9.8px;color:#0000ff;letter-spacing:-0.3px;right:852.30px;text-align:right;">1,500</div>
<div class="t" style="top:320.63px;font-size:9.8px;color:#0000ff;letter-spacing:-0.3px;left:659.20px;">$</div>
<div class="t" style="top:320.63px;font-size:9.8px;color:#0000ff;letter-spacing:-0.3px;right:781.30px;text-align:right;">1,500</div>
<div class="t" style="top:320.63px;font-size:9.8px;color:#0000ff;letter-spacing:-0.3px;left:730.20px;">$</div>
<div class="t" style="top:320.63px;font-size:9.8px;color:#0000ff;letter-spacing:-0.3px;right:710.90px;text-align:right;">1,500</div>
<div class="t" style="top:320.63px;font-size:9.8px;color:#0000ff;letter-spacing:-0.3px;left:800.60px;">$</div>
<div class="t" style="top:320.63px;font-size:9.8px;color:#0000ff;letter-spacing:-0.3px;right:640.50px;text-align:right;">1,500</div>
<div class="t" style="top:320.63px;font-size:9.8px;color:#0000ff;letter-spacing:-0.3px;left:871.00px;">$</div>
<div class="t" style="top:320.63px;font-size:9.8px;color:#0000ff;letter-spacing:-0.3px;right:569.50px;text-align:right;">1,500</div>
<div class="t" style="top:320.63px;font-size:9.8px;color:#0000ff;letter-spacing:-0.3px;left:942.00px;">$</div>
<div class="t" style="top:320.63px;font-size:9.8px;color:#0000ff;letter-spacing:-0.3px;right:499.30px;text-align:right;">1,500</div>
<div class="t" style="top:320.63px;font-size:9.8px;color:#0000ff;letter-spacing:-0.3px;left:1012.20px;">$</div>
<div class="t" style="top:320.63px;font-size:9.8px;color:#0000ff;letter-spacing:-0.3px;right:428.30px;text-align:right;">1,500</div>
<div class="t" style="top:321.69px;font-size:10.2px;color:#9c9c9c;letter-spacing:-0.21px;font-style:italic;left:1158.50px;">Major appliances like TV, fridge, washer/dryer, work station, game console, etc...</div>
<div class="t" style="top:335.26px;font-size:9.8px;color:#0000ff;letter-spacing:0.2px;left:11.85px;">Security deposit</div>
<div class="t" style="top:335.26px;font-size:9.8px;color:#0000ff;letter-spacing:-0.3px;left:245.60px;">$</div>
<div class="t" style="top:335.26px;font-size:9.8px;color:#0000ff;letter-spacing:-0.3px;right:1123.30px;text-align:right;">-</div>
<div class="t" style="top:335.26px;font-size:9.8px;color:#0000ff;letter-spacing:-0.3px;left:388.20px;">$</div>
<div class="t" style="top:335.26px;font-size:9.8px;color:#0000ff;letter-spacing:-0.3px;right:1037.30px;text-align:right;">-</div>
<div class="t" style="top:335.26px;font-size:9.8px;color:#0000ff;letter-spacing:-0.3px;left:474.20px;">$</div>
<div class="t" style="top:335.26px;font-size:9.8px;color:#0000ff;letter-spacing:-0.3px;right:922.30px;text-align:right;">-</div>
<div class="t" style="top:335.26px;font-size:9.8px;color:#0000ff;letter-spacing:-0.3px;left:589.20px;">$</div>
<div class="t" style="top:335.26px;font-size:9.8px;color:#0000ff;letter-spacing:-0.3px;right:852.30px;text-align:right;">-</div>
<div class="t" style="top:335.26px;font-size:9.8px;color:#0000ff;letter-spacing:-0.3px;left:659.20px;">$</div>
<div class="t" style="top:335.26px;font-size:9.8px;color:#0000ff;letter-spacing:-0.3px;right:781.30px;text-align:right;">-</div>
<div class="t" style="top:335.26px;font-size:9.8px;color:#0000ff;letter-spacing:-0.3px;left:730.20px;">$</div>
<div class="t" style="top:335.26px;font-size:9.8px;color:#0000ff;letter-spacing:-0.3px;right:710.90px;text-align:right;">-</div>
<div class="t" style="top:335.26px;font-size:9.8px;color:#0000ff;letter-spacing:-0.3px;left:800.60px;">$</div>
<div class="t" style="top:335.26px;font-size:9.8px;color:#0000ff;letter-spacing:-0.3px;right:640.50px;text-align:right;">-</div>
<div class="t" style="top:335.26px;font-size:9.8px;color:#0000ff;letter-spacing:-0.3px;left:871.00px;">$</div>
<div class="t" style="top:335.26px;font-size:9.8px;color:#0000ff;letter-spacing:-0.3px;right:569.50px;text-align:right;">-</div>
<div class="t" style="top:335.26px;font-size:9.8px;color:#0000ff;letter-spacing:-0.3px;left:942.00px;">$</div>
<div class="t" style="top:335.26px;font-size:9.8px;color:#0000ff;letter-spacing:-0.3px;right:499.30px;text-align:right;">-</div>
<div class="t" style="top:335.26px;font-size:9.8px;color:#0000ff;letter-spacing:-0.3px;left:1012.20px;">$</div>
<div class="t" style="top:335.26px;font-size:9.8px;color:#0000ff;letter-spacing:-0.3px;right:428.30px;text-align:right;">-</div>
<div class="t" style="top:336.32px;font-size:10.2px;color:#9c9c9c;letter-spacing:-0.21px;font-style:italic;left:1158.50px;">Per leasing requirement</div>
<div class="t" style="top:349.89px;font-size:9.8px;color:#0000ff;letter-spacing:0.36px;left:11.85px;">Bedroom (non furniture)</div>
<div class="t" style="top:349.89px;font-size:9.8px;color:#0000ff;letter-spacing:-0.3px;left:245.60px;">$</div>
<div class="t" style="top:349.89px;font-size:9.8px;color:#0000ff;letter-spacing:-0.3px;right:1123.30px;text-align:right;">500</div>
<div class="t" style="top:349.89px;font-size:9.8px;color:#0000ff;letter-spacing:-0.3px;left:388.20px;">$</div>
<div class="t" style="top:349.89px;font-size:9.8px;color:#0000ff;letter-spacing:-0.3px;right:1037.30px;text-align:right;">500</div>
<div class="t" style="top:349.89px;font-size:9.8px;color:#0000ff;letter-spacing:-0.3px;left:474.20px;">$</div>
<div class="t" style="top:349.89px;font-size:9.8px;color:#0000ff;letter-spacing:-0.3px;right:922.30px;text-align:right;">500</div>
<div class="t" style="top:349.89px;font-size:9.8px;color:#0000ff;letter-spacing:-0.3px;left:589.20px;">$</div>
<div class="t" style="top:349.89px;font-size:9.8px;color:#0000ff;letter-spacing:-0.3px;right:852.30px;text-align:right;">500</div>
<div class="t" style="top:349.89px;font-size:9.8px;color:#0000ff;letter-spacing:-0.3px;left:659.20px;">$</div>
<div class="t" style="top:349.89px;font-size:9.8px;color:#0000ff;letter-spacing:-0.3px;right:781.30px;text-align:right;">500</div>
<div class="t" style="top:349.89px;font-size:9.8px;color:#0000ff;letter-spacing:-0.3px;left:730.20px;">$</div>
<div class="t" style="top:349.89px;font-size:9.8px;color:#0000ff;letter-spacing:-0.3px;right:710.90px;text-align:right;">500</div>
<div class="t" style="top:349.89px;font-size:9.8px;color:#0000ff;letter-spacing:-0.3px;left:800.60px;">$</div>
<div class="t" style="top:349.89px;font-size:9.8px;color:#0000ff;letter-spacing:-0.3px;right:640.50px;text-align:right;">500</div>
<div class="t" style="top:349.89px;font-size:9.8px;color:#0000ff;letter-spacing:-0.3px;left:871.00px;">$</div>
<div class="t" style="top:349.89px;font-size:9.8px;color:#0000ff;letter-spacing:-0.3px;right:569.50px;text-align:right;">500</div>
<div class="t" style="top:349.89px;font-size:9.8px;color:#0000ff;letter-spacing:-0.3px;left:942.00px;">$</div>
<div class="t" style="top:349.89px;font-size:9.8px;color:#0000ff;letter-spacing:-0.3px;right:499.30px;text-align:right;">500</div>
<div class="t" style="top:349.89px;font-size:9.8px;color:#0000ff;letter-spacing:-0.3px;left:1012.20px;">$</div>
<div class="t" style="top:349.89px;font-size:9.8px;color:#0000ff;letter-spacing:-0.3px;right:428.30px;text-align:right;">500</div>
<div class="t" style="top:350.95px;font-size:10.2px;color:#9c9c9c;letter-spacing:-0.21px;font-style:italic;left:1158.50px;">e.g. sets of sheets, curtains, décor, etc...</div>
<div class="t" style="top:364.52px;font-size:9.8px;color:#0000ff;letter-spacing:0.36px;left:11.85px;">Bath (non furniture)</div>
<div class="t" style="top:364.52px;font-size:9.8px;color:#0000ff;letter-spacing:-0.3px;left:245.60px;">$</div>
<div class="t" style="top:364.52px;font-size:9.8px;color:#0000ff;letter-spacing:-0.3px;right:1123.30px;text-align:right;">500</div>
<div class="t" style="top:364.52px;font-size:9.8px;color:#0000ff;letter-spacing:-0.3px;left:388.20px;">$</div>
<div class="t" style="top:364.52px;font-size:9.8px;color:#0000ff;letter-spacing:-0.3px;right:1037.30px;text-align:right;">500</div>
<div class="t" style="top:364.52px;font-size:9.8px;color:#0000ff;letter-spacing:-0.3px;left:474.20px;">$</div>
<div class="t" style="top:364.52px;font-size:9.8px;color:#0000ff;letter-spacing:-0.3px;right:922.30px;text-align:right;">500</div>
<div class="t" style="top:364.52px;font-size:9.8px;color:#0000ff;letter-spacing:-0.3px;left:589.20px;">$</div>
<div class="t" style="top:364.52px;font-size:9.8px;color:#0000ff;letter-spacing:-0.3px;right:852.30px;text-align:right;">500</div>
<div class="t" style="top:364.52px;font-size:9.8px;color:#0000ff;letter-spacing:-0.3px;left:659.20px;">$</div>
<div class="t" style="top:364.52px;font-size:9.8px;color:#0000ff;letter-spacing:-0.3px;right:781.30px;text-align:right;">500</div>
<div class="t" style="top:364.52px;font-size:9.8px;color:#0000ff;letter-spacing:-0.3px;left:730.20px;">$</div>
<div class="t" style="top:364.52px;font-size:9.8px;color:#0000ff;letter-spacing:-0.3px;right:710.90px;text-align:right;">500</div>
<div class="t" style="top:364.52px;font-size:9.8px;color:#0000ff;letter-spacing:-0.3px;left:800.60px;">$</div>
<div class="t" style="top:364.52px;font-size:9.8px;color:#0000ff;letter-spacing:-0.3px;right:640.50px;text-align:right;">500</div>
<div class="t" style="top:364.52px;font-size:9.8px;color:#0000ff;letter-spacing:-0.3px;left:871.00px;">$</div>
<div class="t" style="top:364.52px;font-size:9.8px;color:#0000ff;letter-spacing:-0.3px;right:569.50px;text-align:right;">500</div>
<div class="t" style="top:364.52px;font-size:9.8px;color:#0000ff;letter-spacing:-0.3px;left:942.00px;">$</div>
<div class="t" style="top:364.52px;font-size:9.8px;color:#0000ff;letter-spacing:-0.3px;right:499.30px;text-align:right;">500</div>
<div class="t" style="top:364.52px;font-size:9.8px;color:#0000ff;letter-spacing:-0.3px;left:1012.20px;">$</div>
<div class="t" style="top:364.52px;font-size:9.8px;color:#0000ff;letter-spacing:-0.3px;right:428.30px;text-align:right;">500</div>
<div class="t" style="top:365.58px;font-size:10.2px;color:#9c9c9c;letter-spacing:-0.21px;font-style:italic;left:1158.50px;">e.g. towel sets, basic disposable toiletries, mats, shower curtains, etc...</div>
<div class="t" style="top:379.15px;font-size:9.8px;color:#0000ff;letter-spacing:0.36px;left:11.85px;">Kitchen (non furniture)</div>
<div class="t" style="top:379.15px;font-size:9.8px;color:#0000ff;letter-spacing:-0.3px;left:245.60px;">$</div>
<div class="t" style="top:379.15px;font-size:9.8px;color:#0000ff;letter-spacing:-0.3px;right:1123.30px;text-align:right;">400</div>
<div class="t" style="top:379.15px;font-size:9.8px;color:#0000ff;letter-spacing:-0.3px;left:388.20px;">$</div>
<div class="t" style="top:379.15px;font-size:9.8px;color:#0000ff;letter-spacing:-0.3px;right:1037.30px;text-align:right;">400</div>
<div class="t" style="top:379.15px;font-size:9.8px;color:#0000ff;letter-spacing:-0.3px;left:474.20px;">$</div>
<div class="t" style="top:379.15px;font-size:9.8px;color:#0000ff;letter-spacing:-0.3px;right:922.30px;text-align:right;">400</div>
<div class="t" style="top:379.15px;font-size:9.8px;color:#0000ff;letter-spacing:-0.3px;left:589.20px;">$</div>
<div class="t" style="top:379.15px;font-size:9.8px;color:#0000ff;letter-spacing:-0.3px;right:852.30px;text-align:right;">400</div>
<div class="t" style="top:379.15px;font-size:9.8px;color:#0000ff;letter-spacing:-0.3px;left:659.20px;">$</div>
<div class="t" style="top:379.15px;font-size:9.8px;color:#0000ff;letter-spacing:-0.3px;right:781.30px;text-align:right;">400</div>
<div class="t" style="top:379.15px;font-size:9.8px;color:#0000ff;letter-spacing:-0.3px;left:730.20px;">$</div>
<div class="t" style="top:379.15px;font-size:9.8px;color:#0000ff;letter-spacing:-0.3px;right:710.90px;text-align:right;">400</div>
<div class="t" style="top:379.15px;font-size:9.8px;color:#0000ff;letter-spacing:-0.3px;left:800.60px;">$</div>
<div class="t" style="top:379.15px;font-size:9.8px;color:#0000ff;letter-spacing:-0.3px;right:640.50px;text-align:right;">400</div>
<div class="t" style="top:379.15px;font-size:9.8px;color:#0000ff;letter-spacing:-0.3px;left:871.00px;">$</div>
<div class="t" style="top:379.15px;font-size:9.8px;color:#0000ff;letter-spacing:-0.3px;right:569.50px;text-align:right;">400</div>
<div class="t" style="top:379.15px;font-size:9.8px;color:#0000ff;letter-spacing:-0.3px;left:942.00px;">$</div>
<div class="t" style="top:379.15px;font-size:9.8px;color:#0000ff;letter-spacing:-0.3px;right:499.30px;text-align:right;">400</div>
<div class="t" style="top:379.15px;font-size:9.8px;color:#0000ff;letter-spacing:-0.3px;left:1012.20px;">$</div>
<div class="t" style="top:379.15px;font-size:9.8px;color:#0000ff;letter-spacing:-0.3px;right:428.30px;text-align:right;">400</div>
<div class="t" style="top:380.21px;font-size:10.2px;color:#9c9c9c;letter-spacing:-0.21px;font-style:italic;left:1158.50px;">e.g. plates, utensils, coffee, décor, etc...</div>
<div class="t" style="top:393.78px;font-size:9.8px;color:#0000ff;letter-spacing:0.2px;left:11.85px;">Misc1</div>
<div class="t" style="top:394.84px;font-size:10.2px;color:#9c9c9c;letter-spacing:-0.21px;font-style:italic;left:1158.50px;">e.g. Cost of rent before first rental</div>
<div class="t" style="top:408.41px;font-size:9.8px;color:#0000ff;letter-spacing:0.2px;left:11.85px;">Misc2</div>
<div class="t" style="top:409.47px;font-size:10.2px;color:#9c9c9c;letter-spacing:-0.21px;font-style:italic;left:1158.50px;">Any other startup costs not covered above</div>
<div class="t" style="top:423.04px;font-size:9.8px;color:#0000ff;letter-spacing:0.2px;left:11.85px;">Misc3</div>
<div class="t" style="top:424.10px;font-size:10.2px;color:#9c9c9c;letter-spacing:-0.21px;font-style:italic;left:1158.50px;">Any other startup costs not covered above</div>
<div class="t" style="top:437.67px;font-size:9.8px;color:#0000ff;letter-spacing:0.2px;left:11.85px;">Misc4</div>
<div class="t" style="top:438.73px;font-size:10.2px;color:#9c9c9c;letter-spacing:-0.21px;font-style:italic;left:1158.50px;">Any other startup costs not covered above</div>
<div class="t" style="top:452.30px;font-size:9.8px;color:#0000ff;letter-spacing:0.2px;left:11.85px;">Misc5</div>
<div class="t" style="top:453.36px;font-size:10.2px;color:#9c9c9c;letter-spacing:-0.21px;font-style:italic;left:1158.50px;">Any other startup costs not covered above</div>
<div class="t" style="top:466.60px;font-size:9.8px;color:#000000;letter-spacing:0.2px;left:-30.50px;width:300px;text-align:center;">Total</div>
<div class="t" style="top:466.60px;font-size:9.8px;color:#000000;letter-spacing:-0.3px;left:245.60px;">$</div>
<div class="t" style="top:466.60px;font-size:9.8px;color:#000000;letter-spacing:-0.3px;right:1123.30px;text-align:right;">6,400.00</div>
<div class="t" style="top:466.60px;font-size:9.8px;color:#000000;letter-spacing:-0.3px;left:388.20px;">$</div>
<div class="t" style="top:466.60px;font-size:9.8px;color:#000000;letter-spacing:-0.3px;right:1037.30px;text-align:right;">5,400.00</div>
<div class="t" style="top:466.60px;font-size:9.8px;color:#000000;letter-spacing:-0.3px;left:474.20px;">$</div>
<div class="t" style="top:466.60px;font-size:9.8px;color:#000000;letter-spacing:-0.3px;right:922.30px;text-align:right;">5,400.00</div>
<div class="t" style="top:466.60px;font-size:9.8px;color:#000000;letter-spacing:-0.3px;left:589.20px;">$</div>
<div class="t" style="top:466.60px;font-size:9.8px;color:#000000;letter-spacing:-0.3px;right:852.30px;text-align:right;">5,400.00</div>
<div class="t" style="top:466.60px;font-size:9.8px;color:#000000;letter-spacing:-0.3px;left:659.20px;">$</div>
<div class="t" style="top:466.60px;font-size:9.8px;color:#000000;letter-spacing:-0.3px;right:781.30px;text-align:right;">5,400.00</div>
<div class="t" style="top:466.60px;font-size:9.8px;color:#000000;letter-spacing:-0.3px;left:730.20px;">$</div>
<div class="t" style="top:466.60px;font-size:9.8px;color:#000000;letter-spacing:-0.3px;right:710.90px;text-align:right;">5,400.00</div>
<div class="t" style="top:466.60px;font-size:9.8px;color:#000000;letter-spacing:-0.3px;left:800.60px;">$</div>
<div class="t" style="top:466.60px;font-size:9.8px;color:#000000;letter-spacing:-0.3px;right:640.50px;text-align:right;">5,400.00</div>
<div class="t" style="top:466.60px;font-size:9.8px;color:#000000;letter-spacing:-0.3px;left:871.00px;">$</div>
<div class="t" style="top:466.60px;font-size:9.8px;color:#000000;letter-spacing:-0.3px;right:569.50px;text-align:right;">5,400.00</div>
<div class="t" style="top:466.60px;font-size:9.8px;color:#000000;letter-spacing:-0.3px;left:942.00px;">$</div>
<div class="t" style="top:466.60px;font-size:9.8px;color:#000000;letter-spacing:-0.3px;right:499.30px;text-align:right;">5,400.00</div>
<div class="t" style="top:466.60px;font-size:9.8px;color:#000000;letter-spacing:-0.3px;left:1012.20px;">$</div>
<div class="t" style="top:466.60px;font-size:9.8px;color:#000000;letter-spacing:-0.3px;right:428.30px;text-align:right;">5,400.00</div>
<div class="t" style="top:466.60px;font-size:9.8px;color:#000000;letter-spacing:-0.3px;left:1082.90px;">$</div>
<div class="t" style="top:466.60px;font-size:9.8px;color:#000000;letter-spacing:-0.3px;right:359.70px;text-align:right;">-</div>
</body></html>
